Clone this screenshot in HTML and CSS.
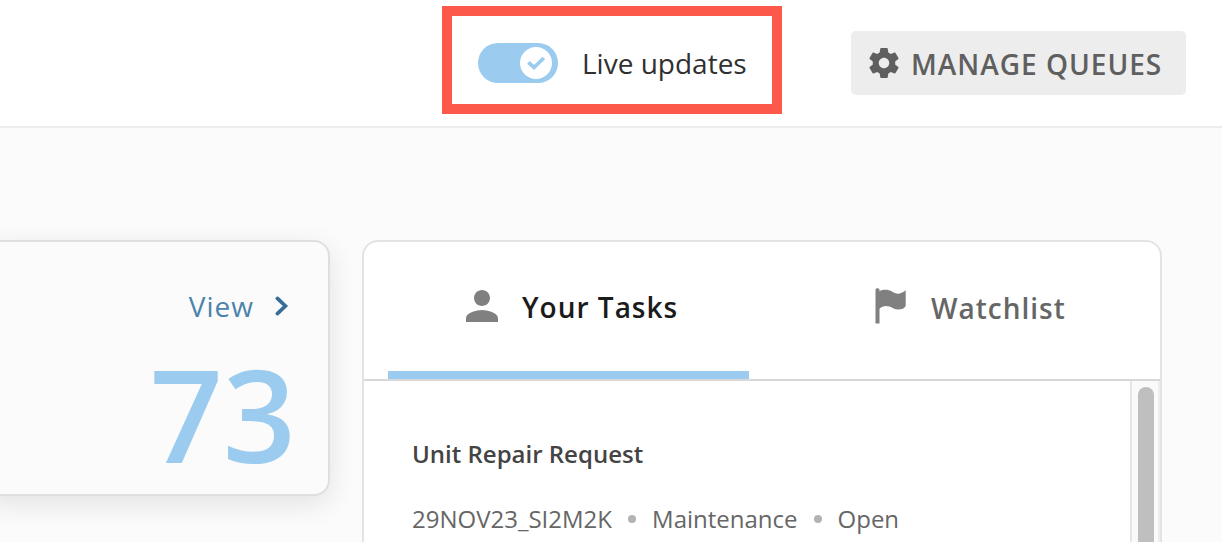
FILE: index.html
```html
<!DOCTYPE html>
<html lang="en">
<head>
<meta charset="UTF-8">
<meta name="viewport" content="width=device-width, initial-scale=1.0">
<title>Queues</title>
<link rel="stylesheet" href="styles.css">
</head>
<body>
    <header class="topbar">
        <div class="highlight">
            <span class="toggle">
                <span class="knob">
                    <svg width="20" height="16" viewBox="0 0 20 16"><path d="M2.4 7.3 L8 12.500 L17.800 3" fill="none" stroke="#9bcbee" stroke-width="3.8"/></svg>
                </span>
            </span>
            <span class="toggle-label">Live updates</span>
        </div>
        <button class="manage">
            <svg width="36" height="36" viewBox="0 0 24 24" fill="#5f5f5f"><path d="M19.43 12.98c.04-.32.07-.64.07-.98s-.03-.66-.07-.98l2.11-1.65c.19-.15.24-.42.12-.64l-2-3.46c-.12-.22-.39-.3-.61-.22l-2.49 1c-.52-.4-1.08-.73-1.69-.98l-.38-2.65C14.46 2.18 14.25 2 14 2h-4c-.25 0-.46.18-.49.42l-.38 2.65c-.61.25-1.17.59-1.69.98l-2.49-1c-.23-.09-.49 0-.61.22l-2 3.46c-.13.22-.07.49.12.64l2.11 1.65c-.04.32-.07.65-.07.98s.03.66.07.98l-2.11 1.65c-.19.15-.24.42-.12.64l2 3.46c.12.22.39.3.61.22l2.49-1c.52.4 1.08.73 1.69.98l.38 2.65c.03.24.24.42.49.42h4c.25 0 .46-.18.49-.42l.38-2.65c.61-.25 1.17-.59 1.69-.98l2.49 1c.23.09.49 0 .61-.22l2-3.46c.12-.22.07-.49-.12-.64l-2.11-1.65zM12 15.5c-1.93 0-3.5-1.57-3.5-3.5s1.57-3.5 3.5-3.5 3.5 1.57 3.5 3.5-1.57 3.5-3.5 3.5z"/></svg>
            <span>MANAGE QUEUES</span>
        </button>
    </header>

    <main class="content">
        <section class="count-card">
            <a class="view" href="#">
                <span>View</span>
                <svg width="14" height="20" viewBox="0 0 14 20"><path d="M2.4 2.4 L10.4 10 L2.4 17.6" fill="none" stroke="#376d99" stroke-width="3.7" stroke-linecap="round"/></svg>
            </a>
            <div class="count">73</div>
        </section>

        <section class="panel">
            <nav class="tabs">
                <a class="tab active" href="#">
                    <svg class="person" width="48" height="48" viewBox="0 0 24 24" fill="#808080"><path d="M12 12c2.21 0 4-1.79 4-4s-1.79-4-4-4-4 1.79-4 4 1.79 4 4 4zm0 2c-2.67 0-8 1.34-8 4v2h16v-2c0-2.66-5.33-4-8-4z"/></svg>
                    <span>Your Tasks</span>
                </a>
                <a class="tab" href="#">
                    <svg class="flag" width="32" height="36" viewBox="0 0 32 36" fill="#808080"><path d="M0.5 2 C0.5 -0.3 4.5 -0.3 4.5 2 V3.2 C8 1.2 13.5 1.2 17 3.6 C21.500 6.600 25.500 6.500 30.700 2.300 V18 C29 21.400 23 22.900 18 20.300 C13 17.200 8 17.400 4.500 20.800 V35.500 H0.500 Z"/></svg>
                    <span>Watchlist</span>
                </a>
            </nav>
            <div class="panel-body">
                <article class="task">
                    <h3>Unit Repair Request</h3>
                    <div class="meta">
                        <span>29NOV23_SI2M2K</span>
                        <i class="dot"></i>
                        <span>Maintenance</span>
                        <i class="dot"></i>
                        <span>Open</span>
                    </div>
                </article>
                <div class="track"><div class="thumb"></div></div>
            </div>
        </section>
    </main>
</body>
</html>
```
FILE: styles.css
```css
* {
    box-sizing: border-box;
}
body {
    margin: 0;
    height: 542px;
    overflow: hidden;
    font-family: "Open Sans", "Noto Sans", sans-serif;
    font-size: 28px;
    background: #fbfbfb;
}
svg {
    display: block;
    flex: none;
}
a {
    text-decoration: none;
}
.topbar {
    display: flex;
    justify-content: flex-end;
    align-items: flex-start;
    height: 128px;
    padding-right: 36px;
    background: #fff;
    border-bottom: 2px solid #ededed;
}
.highlight {
    display: flex;
    align-items: center;
    width: 340px;
    height: 108px;
    margin: 6px 69px 0 0;
    padding: 6px 0 0 26px;
    border: 10px solid #fd594b;
}
.toggle {
    display: flex;
    justify-content: flex-end;
    align-items: center;
    width: 80px;
    height: 40px;
    margin-right: 24px;
    padding-right: 6px;
    border-radius: 20px;
    background: #9bcbee;
}
.knob {
    display: flex;
    align-items: center;
    justify-content: center;
    width: 32px;
    height: 32px;
    border-radius: 50%;
    background: #fff;
}
.toggle-label {
    color: #303030;
    line-height: 40px;
    white-space: nowrap;
}
.manage {
    display: flex;
    align-items: center;
    gap: 9px;
    width: 335px;
    height: 64px;
    margin-top: 31px;
    padding: 0 0 0 15px;
    border: none;
    border-radius: 5px;
    background: #ededed;
    color: #5f5f5f;
    font: 600 28px "Open Sans", sans-serif;
    letter-spacing: 1px;
    white-space: nowrap;
}
.manage span {
    padding-top: 1px;
}
.content {
    display: flex;
    align-items: flex-start;
    height: 414px;
    padding-top: 112px;
    overflow: hidden;
}
.count-card {
    width: 345px;
    height: 256px;
    margin: 0 32px 0 -15px;
    padding: 45px 39px 0 0;
    border: 2px solid #dfdfdf;
    border-radius: 16px;
    background: #fbfbfb;
    box-shadow: 0 8px 28px rgba(0, 0, 0, 0.1);
    text-align: right;
}
.view {
    display: flex;
    justify-content: flex-end;
    align-items: center;
    gap: 21px;
    height: 38px;
    color: #4a83ab;
    letter-spacing: 1px;
}
.count {
    margin: 24px -7px 0 0;
    color: #9bcbee;
    font-size: 128px;
    font-weight: 600;
    line-height: 130px;
}
.panel {
    width: 800px;
    height: 302px;
    border: 2px solid #e3e3e3;
    border-bottom: none;
    border-radius: 16px 16px 0 0;
    background: #fff;
    overflow: hidden;
}
.tabs {
    display: flex;
    height: 139px;
    padding: 0 24px;
    border-bottom: 2px solid #d8d8d8;
}
.tab {
    display: flex;
    align-items: center;
    width: 361px;
    height: 137px;
    padding: 0 0 6px 70px;
    color: #666;
    font-weight: 600;
    letter-spacing: 1px;
}
.tab.active {
    color: #1b1b1b;
    border-bottom: 8px solid #9bcbee;
    padding-bottom: 0;
}
.tab.active span {
    padding-top: 1px;
}
.person {
    margin: 0 16px 2px 0;
}
.flag {
    margin: 0 24px 3px 56px;
}
.panel-body {
    display: flex;
    justify-content: space-between;
    height: 161px;
}
.task {
    padding: 56px 0 0 48px;
}
.task h3 {
    margin: 0;
    color: #444;
    font-size: 24px;
    font-weight: 600;
    line-height: 34px;
}
.meta {
    display: flex;
    align-items: center;
    margin-top: 31px;
    color: #666;
    font-size: 24px;
    line-height: 34px;
}
.dot {
    width: 8px;
    height: 8px;
    margin: 0 16px;
    border-radius: 50%;
    background: #b3b3b3;
}
.track {
    width: 30px;
    padding: 6px 4px 0 6px;
    border-left: 2px solid #e6e6e6;
    border-right: 2px solid #ededed;
    background: #fafafa;
}
.thumb {
    width: 16px;
    height: 155px;
    border-radius: 8px 8px 0 0;
    background: #bfbfbf;
}
```
